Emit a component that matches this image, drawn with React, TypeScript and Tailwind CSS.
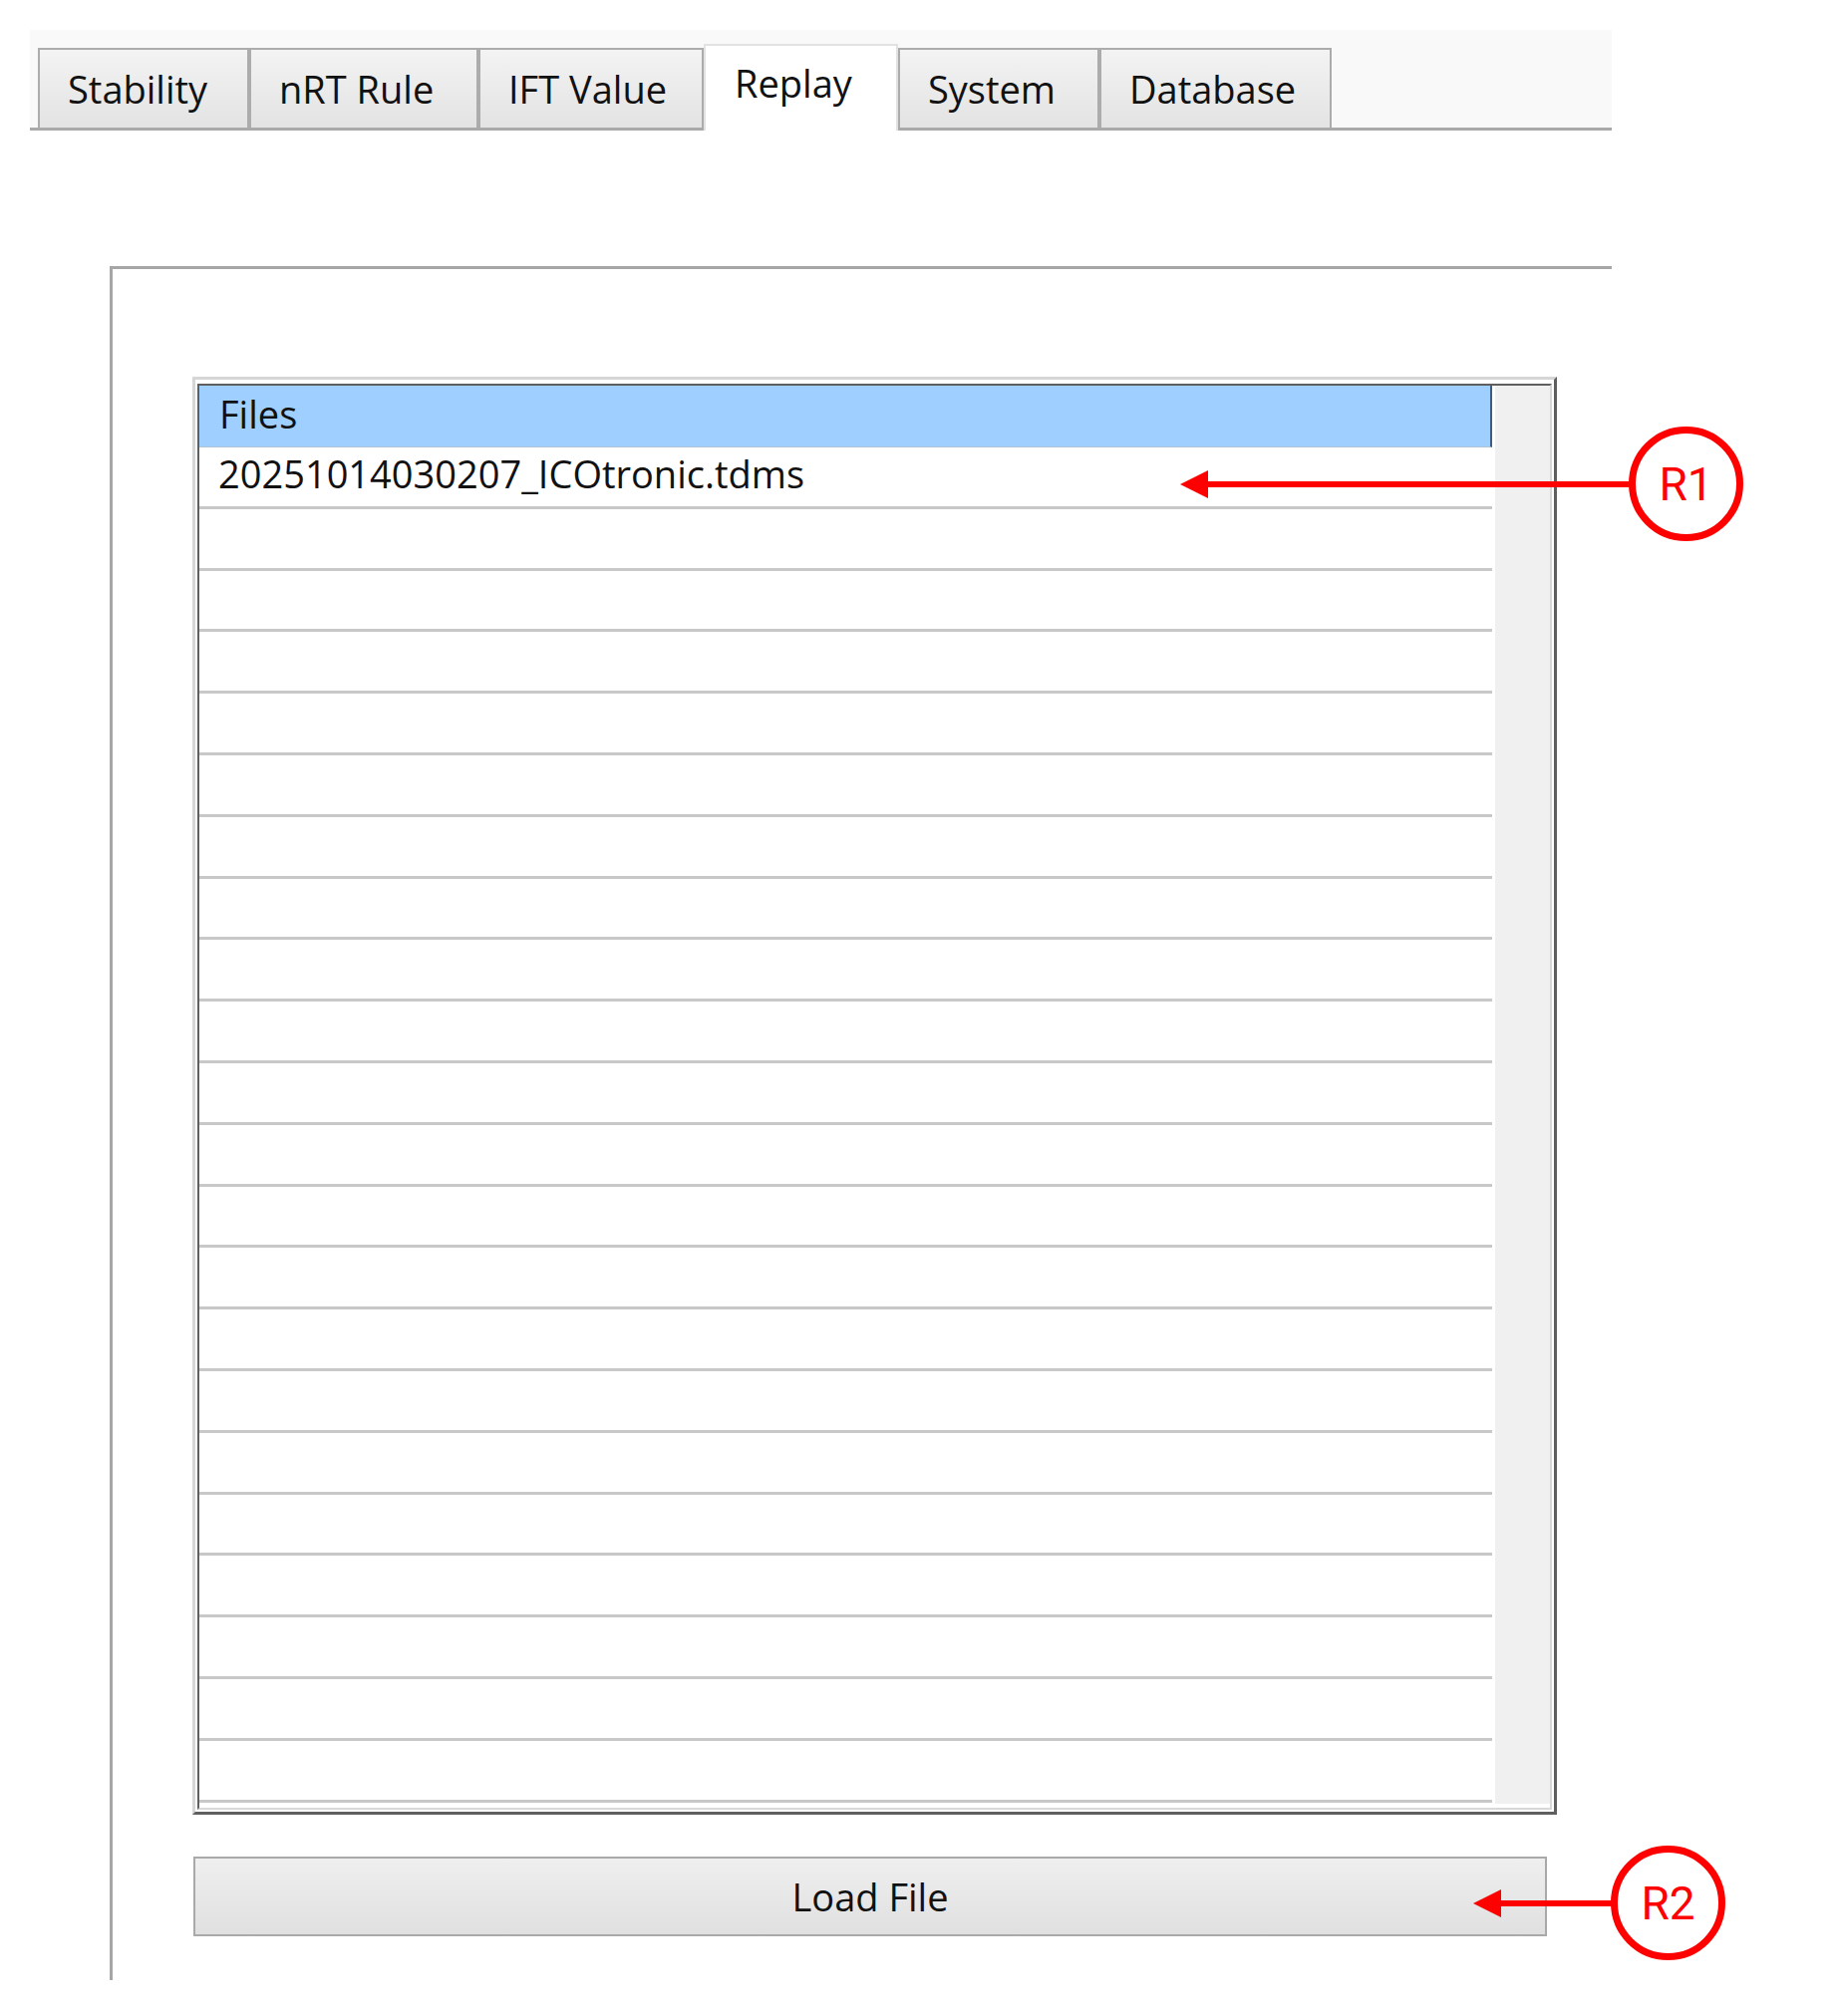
import React from "react";

const tabs = [
  { label: "Stability", w: "w-[212px]" },
  { label: "nRT Rule", w: "w-[230px]" },
  { label: "IFT Value", w: "w-[226px]" },
  { label: "Replay", w: "w-[195px]", active: true },
  { label: "System", w: "w-[202px]" },
  { label: "Database", w: "w-[233px]" },
];

const files = ["20251014030207_ICOtronic.tdms"];
const rowCount = 22;

function Callout({ label, className }: { label: string; className: string }) {
  return (
    <div
      className={`absolute flex h-[115px] w-[115px] items-center justify-center rounded-full border-[7px] border-[#ff0000] bg-white text-[46px] leading-none text-[#ff0000] ${className}`}
      style={{ fontFamily: "Roboto, 'Liberation Sans', sans-serif" }}
    >
      {label}
    </div>
  );
}

export default function App() {
  const rows = Array.from({ length: rowCount }, (_, i) => files[i] ?? "");

  return (
    <div
      className="relative h-[2023px] w-[1845px] overflow-hidden bg-white text-[#111]"
      style={{ fontFamily: "'Open Sans', 'Noto Sans', sans-serif" }}
    >
      {/* tab strip */}
      <div className="ml-[30px] mt-[30px] flex h-[101px] w-[1587px] items-end border-b-[3px] border-[#a9a9a9] bg-[#f9f9f9] pl-[8px]">
        {tabs.map((t) =>
          t.active ? (
            <div
              key={t.label}
              className={`relative z-10 -mb-[3px] flex h-[87px] items-center border-x-2 border-t-2 border-[#e2e2e2] bg-white pb-[10px] pl-[29px] text-[38px] ${t.w}`}
            >
              {t.label}
            </div>
          ) : (
            <div
              key={t.label}
              className={`flex h-[80px] items-center border-x-2 border-t-2 border-[#acacac] bg-gradient-to-b from-[#f3f3f3] to-[#e3e3e3] pl-[28px] text-[38px] ${t.w}`}
            >
              {t.label}
            </div>
          )
        )}
      </div>

      {/* group box */}
      <div className="ml-[110px] mt-[136px] h-[1720px] w-[1507px] border-l-[3px] border-t-[3px] border-[#a6a6a6]">
        {/* listbox */}
        <div className="ml-[80px] mt-[108px] h-[1443px] w-[1369px] border-b-[3px] border-l-[3px] border-r-[3px] border-t-[3px] border-b-[#5f5f5f] border-l-[#d6d6d6] border-r-[#5f5f5f] border-t-[#d6d6d6] bg-white px-[2px] pb-[2px] pt-[4px]">
          <div className="flex h-full w-full border-2 border-b-[#d8d8d8] border-l-[#5f5f5f] border-r-[#d8d8d8] border-t-[#5f5f5f]">
            <div className="flex w-[1297px] flex-col">
              <div className="flex h-[62px] shrink-0 items-center border-b border-r-2 border-b-[#b0c4d8] border-r-[#4a5a6a] bg-[#9fcfff] pb-[5px] pl-[20px] text-[38px]">
                Files
              </div>
              {rows.map((name, i) => (
                <div
                  key={i}
                  className="flex h-[61.8px] shrink-0 items-center border-b-[3px] border-[#c8c8c8] pb-[5px] pl-[19px] text-[38px]"
                >
                  {name}
                </div>
              ))}
            </div>
            <div className="mb-[4px] ml-[3px] w-[55px] bg-[#f0f0f0]" />
          </div>
        </div>

        {/* load button */}
        <button
          type="button"
          className="ml-[81px] mt-[42px] flex h-[80px] w-[1358px] items-center justify-center border-2 border-[#a9a9a9] bg-gradient-to-b from-[#efefef] to-[#e0e0e0] text-[38px] text-[#111]"
        >
          Load File
        </button>
      </div>

      {/* annotations */}
      <svg className="pointer-events-none absolute left-0 top-0" width={1845} height={2023}>
        <line x1={1205} y1={486} x2={1636} y2={486} stroke="#ff0000" strokeWidth={6} />
        <polygon points="1184,486 1212,472 1212,500" fill="#ff0000" />
        <line x1={1500} y1={1910} x2={1617} y2={1910} stroke="#ff0000" strokeWidth={6} />
        <polygon points="1478,1910 1506,1896 1506,1924" fill="#ff0000" />
      </svg>
      <Callout label="R1" className="left-[1634px] top-[428px]" />
      <Callout label="R2" className="left-[1616px] top-[1852px]" />
    </div>
  );
}
